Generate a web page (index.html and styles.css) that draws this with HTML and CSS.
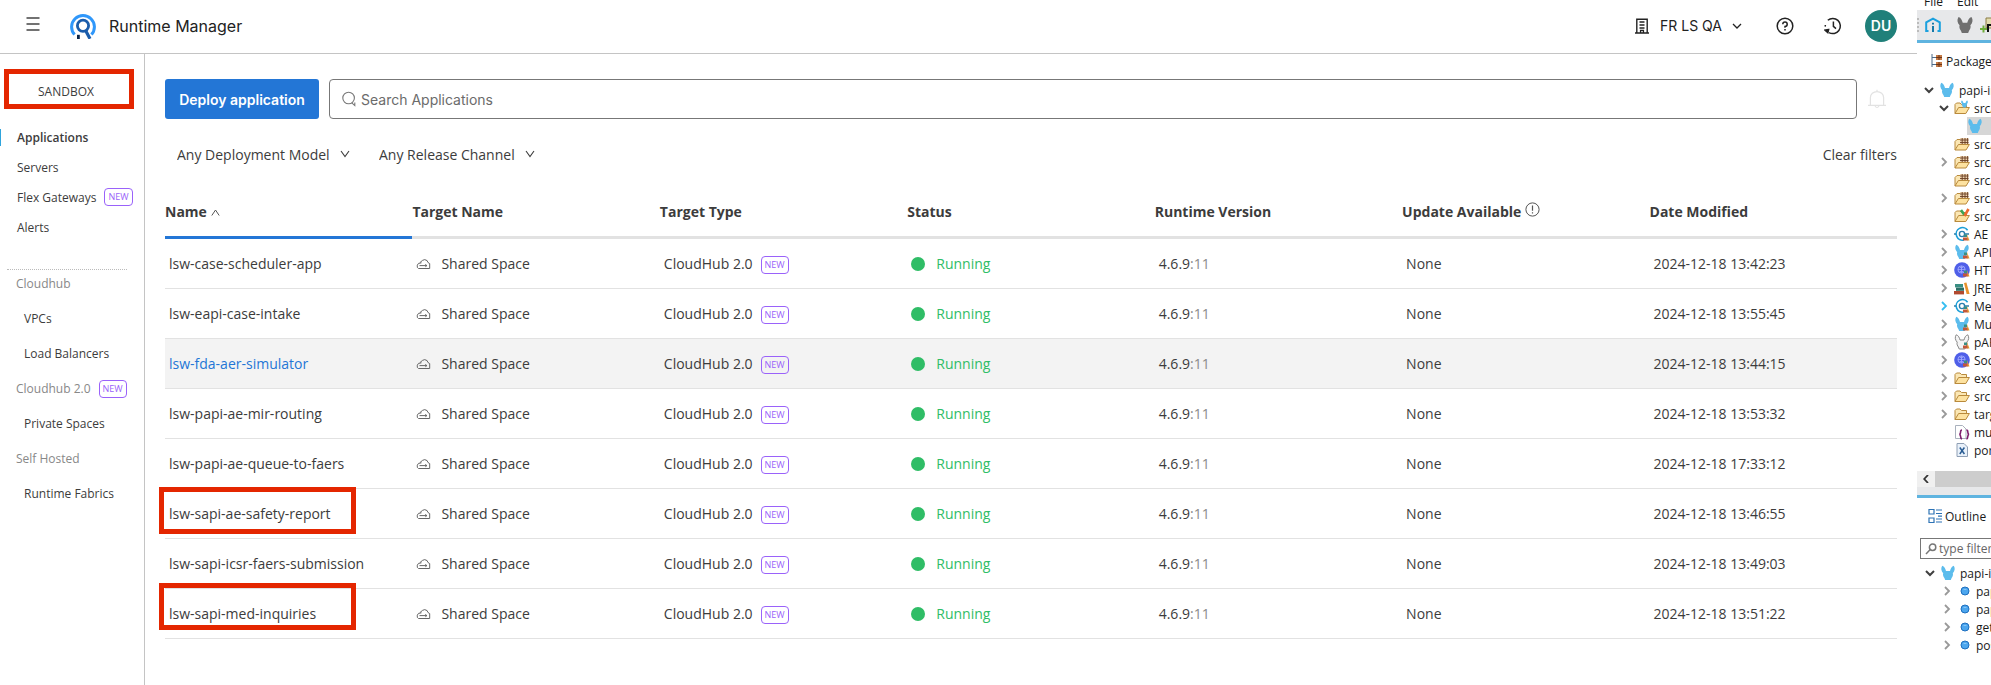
FILE: index.html
```html
<!DOCTYPE html>
<html lang="en">
<head>
    <meta charset="UTF-8">
    <meta name="viewport" content="width=device-width, initial-scale=1.0">
    <title>Runtime Manager</title>
    <link rel="stylesheet" href="styles.css">
</head>
<body>
    <!-- Shared icons -->
    <svg class="sprite" aria-hidden="true">
        <symbol id="cloud" viewBox="0 0 14 12">
            <path d="M3.4 4.6L6 2.4L8.2 1.6L10.6 2.6L11.4 4.4L13.2 5.6V10.5H2L.8 9.4V7.2L2 5.4L5 4.8M3 7.6H10.4M8.8 6.4L10.4 7.6L8.8 8.8" fill="none" stroke="#666" stroke-width="1"/>
        </symbol>
        <symbol id="down" viewBox="0 0 10 10">
            <path d="M1 2L5 7.5L9 2" fill="none" stroke="currentColor" stroke-width="1.1"/>
        </symbol>
        <symbol id="open" viewBox="0 0 10 10">
            <path d="M1 3L5 7L9 3" fill="none" stroke="#404040" stroke-width="2"/>
        </symbol>
        <symbol id="closed" viewBox="0 0 10 10">
            <path d="M3 1L7 5L3 9" fill="none" stroke="currentColor" stroke-width="1.8"/>
        </symbol>
        <symbol id="mule" viewBox="0 0 16 16">
            <path d="M2.2.8C4.4 1.4 5.4 3.6 6 6H10C10.6 3.6 11.6 1.4 13.8.8C15.4 3.4 14.8 6 12.8 8.2C13.4 10 12.6 11.8 11.6 13L10.8 15H5.2L4.4 13C3.4 11.8 2.6 10 3.2 8.2C1.2 6 .6 3.4 2.2.8Z" fill="currentColor"/>
        </symbol>
        <symbol id="folder" viewBox="0 0 16 16">
            <path d="M1 13.5V4.5L2.5 3H6L7.5 4.5H12.5V7" fill="#fbe7b4" stroke="#b98a3c"/>
            <path d="M1 13.5L4.6 7.5H15.4L11.8 13.5Z" fill="#fde2a0" stroke="#b98a3c"/>
        </symbol>
        <symbol id="package" viewBox="0 0 16 16">
            <path d="M1 14V5.5L3 3.5H6L7 5H13V8" fill="#fbe7b4" stroke="#b98a3c"/>
            <path d="M6 2H14.5V9H6Z" fill="#ecd2ae"/>
            <path d="M6 4H14.5M6 6.5H14.5M8.2 2V9M11 2V9M13.6 2V9" stroke="#6b3f24" fill="none" stroke-width=".9"/>
            <path d="M1 14L4.4 8.5H15.4L12 14Z" fill="#fde2a0" stroke="#b98a3c"/>
        </symbol>
        <symbol id="books" viewBox="0 0 16 16">
            <path d="M10 8.5H13V11H10Z" fill="#3a8f83"/>
            <path d="M9 11.5H14V14.5H9Z" fill="#c2573a"/>
            <path d="M13 8L15.5 14.5H13.6Z" fill="#e59a2f"/>
        </symbol>
        <symbol id="connector" viewBox="0 0 16 16">
            <path d="M13.6 4.2A6.3 6.3 0 1 0 10 14" fill="none" stroke="#1c9fd8" stroke-width="1.6"/>
            <circle cx="8" cy="8" r="2.6" fill="none" stroke="#2b7fae" stroke-width="1.4"/>
            <path d="M0 8H2M10.6 8H15" stroke="#2b7fae" stroke-width="1.4"/>
            <use href="#books"/>
        </symbol>
        <symbol id="globe" viewBox="0 0 16 16">
            <circle cx="8" cy="8" r="7.8" fill="#4f5fe8"/>
            <circle cx="7.5" cy="7.5" r="3.6" fill="none" stroke="#a9b3ff" stroke-width=".8"/>
            <path d="M4 7.5H11M7.5 4V11M5.5 5Q7.5 7 9.5 5M5.5 10Q7.5 8 9.5 10" fill="none" stroke="#a9b3ff" stroke-width=".7"/>
            <use href="#books"/>
        </symbol>
        <symbol id="dot" viewBox="0 0 10 10">
            <circle cx="5" cy="5" r="4" fill="#4ca6ee" stroke="#1d6fbf"/>
            <path d="M3 4A2.5 2 0 0 1 7 4Z" fill="#a9d8fa"/>
        </symbol>
    </svg>

    <div class="app">
        <header class="topbar">
            <button class="icon-btn" aria-label="Menu">
                <svg width="14" height="14" viewBox="0 0 14 14"><path d="M.5 1H13.5M.5 7H13.5M.5 13H13.5" stroke="#444" stroke-width="1.5"/></svg>
            </button>
            <svg class="logo" width="26" height="26" viewBox="0 0 26 26" fill="none">
                <path d="M4.6 21.6A11.4 11.4 0 1 1 21.4 21.6" stroke="#2f97fa" stroke-width="3"/>
                <circle cx="13" cy="12.8" r="5.6" stroke="#1a5cab" stroke-width="2.8"/>
                <path d="M15.6 17.4L20 25.8" stroke="#1a5cab" stroke-width="3.2"/>
                <path d="M8.4 21.8V26" stroke="#0b2549" stroke-width="2.8"/>
            </svg>
            <h1>Runtime Manager</h1>
            <div class="topbar-right">
                <button class="org">
                    <svg width="16" height="16" viewBox="0 0 16 16" fill="none" stroke="#222" stroke-width="1.4"><path d="M1 15H15M2.8 15V1.2H13.2V15M5.5 4H10.5M5.5 7H10.5M5.5 10H10.5M6.6 15V12.4H9.4V15"/></svg>
                    FR LS QA
                    <svg width="10" height="10" viewBox="0 0 10 10"><path d="M1 3L5 7L9 3" fill="none" stroke="#222" stroke-width="1.3"/></svg>
                </button>
                <button class="icon-btn" aria-label="Help">
                    <svg width="18" height="18" viewBox="0 0 18 18" fill="none" stroke="#222" stroke-width="1.5"><circle cx="9" cy="9" r="7.8"/><path d="M6.8 7.2A2.2 2.2 0 1 1 9 9.4V10.8M9 12V13.5"/></svg>
                </button>
                <button class="icon-btn" aria-label="History">
                    <svg width="18" height="18" viewBox="0 0 18 18" fill="none" stroke="#222" stroke-width="1.5"><path d="M3.8 3.2A7.6 7.6 0 1 1 5 15.6M9.4 4.5V9.3L12 11.6"/><path d="M4.6 12.6L1 13.2L3.8 15.6Z" fill="#222"/><path d="M1.3 8V9.6"/></svg>
                </button>
                <button class="avatar">DU</button>
            </div>
        </header>

        <div class="body">
            <nav class="sidebar">
                <a class="env" href="#">SANDBOX<span class="mark mark-env"></span></a>
                <ul class="nav-main">
                    <li class="active"><a href="#">Applications</a></li>
                    <li><a href="#">Servers</a></li>
                    <li><a href="#">Flex Gateways</a><span class="new">NEW</span></li>
                    <li><a href="#">Alerts</a></li>
                </ul>
                <ul class="nav-sub">
                    <li class="group">Cloudhub</li>
                    <li><a href="#">VPCs</a></li>
                    <li><a href="#">Load Balancers</a></li>
                    <li class="group">Cloudhub 2.0<span class="new">NEW</span></li>
                    <li><a href="#">Private Spaces</a></li>
                    <li class="group">Self Hosted</li>
                    <li><a href="#">Runtime Fabrics</a></li>
                </ul>
            </nav>

            <main class="content">
                <div class="actions">
                    <button class="deploy">Deploy application</button>
                    <label class="search">
                        <svg width="14" height="16" viewBox="0 0 14 16" fill="none" stroke="#777" stroke-width="1.1"><circle cx="6.6" cy="7" r="5.8"/><path d="M9.8 11.8L12.8 14.6V11.4"/></svg>
                        <input type="text" placeholder="Search Applications" aria-label="Search Applications">
                    </label>
                    <button class="bell" aria-label="Notifications">
                        <svg width="20" height="20" viewBox="0 0 20 20" fill="none" stroke="#e2e2e2" stroke-width="1.2"><path d="M1 16.4H19M3.4 16V8.6C3.4 5 6.4 2.6 10 2.6S16.6 5 16.6 8.6V16M10 .8V2.6M8 17Q10 20 12 17"/></svg>
                    </button>
                </div>

                <div class="filters">
                    <label class="filter">
                        <select aria-label="Deployment model"><option>Any Deployment Model</option></select>
                        <svg width="10" height="10"><use href="#down"/></svg>
                    </label>
                    <label class="filter">
                        <select aria-label="Release channel"><option>Any Release Channel</option></select>
                        <svg width="10" height="10"><use href="#down"/></svg>
                    </label>
                    <button class="clear">Clear filters</button>
                </div>

                <table class="apps">
                    <thead>
                        <tr>
                            <th class="sorted">Name <svg width="9" height="8" viewBox="0 0 9 8"><path d="M.8 6.5L4.5 1L8.2 6.5" fill="none" stroke="#555"/></svg></th>
                            <th>Target Name</th>
                            <th>Target Type</th>
                            <th>Status</th>
                            <th>Runtime Version</th>
                            <th>Update Available <svg class="info" width="15" height="15" viewBox="0 0 15 15" fill="none" stroke="#555"><circle cx="7.5" cy="7.5" r="6.6"/><path d="M7.5 3.4V8.8M7.5 10.2V11.6" stroke-width="1.2"/></svg></th>
                            <th>Date Modified</th>
                        </tr>
                    </thead>
                    <tbody>
                        <tr>
                            <td><a href="#">lsw-case-scheduler-app</a></td>
                            <td><svg class="cloud"><use href="#cloud"/></svg>Shared Space</td>
                            <td>CloudHub 2.0<span class="new">NEW</span></td>
                            <td class="running">Running</td>
                            <td>4.6.9<span class="patch">:11</span></td>
                            <td>None</td>
                            <td>2024-12-18 13:42:23</td>
                        </tr>
                        <tr>
                            <td><a href="#">lsw-eapi-case-intake</a></td>
                            <td><svg class="cloud"><use href="#cloud"/></svg>Shared Space</td>
                            <td>CloudHub 2.0<span class="new">NEW</span></td>
                            <td class="running">Running</td>
                            <td>4.6.9<span class="patch">:11</span></td>
                            <td>None</td>
                            <td>2024-12-18 13:55:45</td>
                        </tr>
                        <tr class="hovered">
                            <td><a href="#">lsw-fda-aer-simulator</a></td>
                            <td><svg class="cloud"><use href="#cloud"/></svg>Shared Space</td>
                            <td>CloudHub 2.0<span class="new">NEW</span></td>
                            <td class="running">Running</td>
                            <td>4.6.9<span class="patch">:11</span></td>
                            <td>None</td>
                            <td>2024-12-18 13:44:15</td>
                        </tr>
                        <tr>
                            <td><a href="#">lsw-papi-ae-mir-routing</a></td>
                            <td><svg class="cloud"><use href="#cloud"/></svg>Shared Space</td>
                            <td>CloudHub 2.0<span class="new">NEW</span></td>
                            <td class="running">Running</td>
                            <td>4.6.9<span class="patch">:11</span></td>
                            <td>None</td>
                            <td>2024-12-18 13:53:32</td>
                        </tr>
                        <tr>
                            <td><a href="#">lsw-papi-ae-queue-to-faers</a></td>
                            <td><svg class="cloud"><use href="#cloud"/></svg>Shared Space</td>
                            <td>CloudHub 2.0<span class="new">NEW</span></td>
                            <td class="running">Running</td>
                            <td>4.6.9<span class="patch">:11</span></td>
                            <td>None</td>
                            <td>2024-12-18 17:33:12</td>
                        </tr>
                        <tr>
                            <td><a href="#">lsw-sapi-ae-safety-report</a><span class="mark mark-report"></span></td>
                            <td><svg class="cloud"><use href="#cloud"/></svg>Shared Space</td>
                            <td>CloudHub 2.0<span class="new">NEW</span></td>
                            <td class="running">Running</td>
                            <td>4.6.9<span class="patch">:11</span></td>
                            <td>None</td>
                            <td>2024-12-18 13:46:55</td>
                        </tr>
                        <tr>
                            <td><a href="#">lsw-sapi-icsr-faers-submission</a></td>
                            <td><svg class="cloud"><use href="#cloud"/></svg>Shared Space</td>
                            <td>CloudHub 2.0<span class="new">NEW</span></td>
                            <td class="running">Running</td>
                            <td>4.6.9<span class="patch">:11</span></td>
                            <td>None</td>
                            <td>2024-12-18 13:49:03</td>
                        </tr>
                        <tr>
                            <td><a href="#">lsw-sapi-med-inquiries</a><span class="mark mark-inquiries"></span></td>
                            <td><svg class="cloud"><use href="#cloud"/></svg>Shared Space</td>
                            <td>CloudHub 2.0<span class="new">NEW</span></td>
                            <td class="running">Running</td>
                            <td>4.6.9<span class="patch">:11</span></td>
                            <td>None</td>
                            <td>2024-12-18 13:51:22</td>
                        </tr>
                    </tbody>
                </table>
            </main>
        </div>
    </div>

    <!-- Studio window -->
    <aside class="ide">
        <div class="ide-menu"><span>File</span><span>Edit</span></div>
        <div class="ide-tools">
            <span class="grip"></span>
            <svg width="16" height="16" viewBox="0 0 16 16" fill="none" stroke="#1ba0de" stroke-width="2"><path d="M3.5 14H1.2V5.4L8 1.6L14.8 5.4V14H12.5"/><path d="M8 9V15M8 5.8V7.6" stroke="#1679a8"/></svg>
            <span class="sep"></span>
            <svg class="gray" width="18" height="18"><use href="#mule"/></svg>
            <svg width="18" height="18" viewBox="0 0 18 18"><path d="M6 2H16V12H6Z" fill="#e3dcae" stroke="#8a7d45"/><path d="M0 13H7M3.5 9.5V16.5" stroke="#6fae3a" stroke-width="2"/><path d="M8 16V9H18M12 16V9M16 16V9" stroke="#111" stroke-width="2" fill="none"/></svg>
        </div>
        <div class="ide-tab">
            <svg width="12" height="14" viewBox="0 0 12 14"><path d="M1 0V13M1 3.5H5M1 10.5H5" stroke="#4c6b88" fill="none"/><path d="M5 1H11V6H5ZM5 8H11V13H5Z" fill="#c47a45"/><path d="M5 3.5H11M8 1V6M5 10.5H11M8 8V13" stroke="#6e3517"/></svg>
            Package
        </div>
        <ul class="tree explorer">
            <li class="root"><svg class="arrow"><use href="#open"/></svg><svg class="ico blue"><use href="#mule"/></svg>papi-in</li>
            <li><svg class="arrow"><use href="#open"/></svg><svg class="ico blue" viewBox="0 0 16 16"><use href="#folder"/><use href="#mule" x="6" y="0" width="9" height="8"/></svg>src/</li>
            <li class="selected"><svg class="ico blue"><use href="#mule"/></svg></li>
            <li><i class="arrow"></i><svg class="ico"><use href="#package"/></svg>src/</li>
            <li><svg class="arrow"><use href="#closed"/></svg><svg class="ico"><use href="#package"/></svg>src/</li>
            <li><i class="arrow"></i><svg class="ico"><use href="#package"/></svg>src/</li>
            <li><svg class="arrow"><use href="#closed"/></svg><svg class="ico"><use href="#package"/></svg>src/</li>
            <li><i class="arrow"></i><svg class="ico" viewBox="0 0 16 16"><use href="#folder"/><path d="M7 2L10.5 7" stroke="#3aa655" stroke-width="2.6"/><path d="M14.5 1L10.5 8" stroke="#ee6a2c" stroke-width="2.6"/></svg>src/</li>
            <li><svg class="arrow"><use href="#closed"/></svg><svg class="ico"><use href="#connector"/></svg>AE</li>
            <li><svg class="arrow"><use href="#closed"/></svg><svg class="ico blue" viewBox="0 0 16 16"><use href="#mule"/><use href="#books"/></svg>API</li>
            <li><svg class="arrow"><use href="#closed"/></svg><svg class="ico"><use href="#globe"/></svg>HTT</li>
            <li><svg class="arrow"><use href="#closed"/></svg><svg class="ico" viewBox="0 0 16 16"><path d="M1 4H9V7.4H1Z" fill="#3a8f83"/><path d="M2 7.6H10V10.8H2Z" fill="#2c6f66"/><path d="M0 11H10V14.4H0Z" fill="#b1492f"/><path d="M10 3L12.4 2.4L15.6 14H12.6Z" fill="#e8912c"/></svg>JRE</li>
            <li><svg class="arrow lit"><use href="#closed"/></svg><svg class="ico"><use href="#connector"/></svg>Me</li>
            <li><svg class="arrow"><use href="#closed"/></svg><svg class="ico blue" viewBox="0 0 16 16"><use href="#mule"/><use href="#books"/></svg>Mu</li>
            <li><svg class="arrow"><use href="#closed"/></svg><svg class="ico outline" viewBox="0 0 16 16"><use href="#mule" stroke="#888"/><use href="#books"/></svg>pAP</li>
            <li><svg class="arrow"><use href="#closed"/></svg><svg class="ico"><use href="#globe"/></svg>Soc</li>
            <li><svg class="arrow"><use href="#closed"/></svg><svg class="ico"><use href="#folder"/></svg>exc</li>
            <li><svg class="arrow"><use href="#closed"/></svg><svg class="ico"><use href="#folder"/></svg>src</li>
            <li><svg class="arrow"><use href="#closed"/></svg><svg class="ico"><use href="#folder"/></svg>targ</li>
            <li><i class="arrow"></i><svg class="ico" viewBox="0 0 16 16" fill="none"><path d="M1.5 14.5V1.5H8.5L12 5V14.5Z" fill="#fff" stroke="#a9b1bd"/><path d="M8 6Q6.6 6 6.6 8T5.4 10.4Q6.6 10.6 6.6 12.6T8 15M12.4 6Q13.8 6 13.8 8T15 10.4Q13.8 10.6 13.8 12.6T12.4 15" stroke="#7d1f6d" stroke-width="1.6"/></svg>mu</li>
            <li><i class="arrow"></i><svg class="ico" viewBox="0 0 16 16" fill="none"><path d="M3 14.5V1.5H10L13.5 5V14.5Z" fill="#e9f1fa" stroke="#8f9fb4"/><path d="M5.8 5.5L10.4 12M10.4 5.5L5.8 12" stroke="#2a5d94" stroke-width="1.5"/></svg>por</li>
        </ul>
        <div class="scrollbar">
            <svg width="6" height="8" viewBox="0 0 6 8"><path d="M5 0L1.2 4L5 8" fill="none" stroke="#333" stroke-width="1.8"/></svg>
            <span class="thumb"></span>
        </div>
        <div class="ide-tab outline-tab">
            <svg width="14" height="16" viewBox="0 0 14 16" fill="none" stroke="#2d73b5" stroke-width="1.2"><path d="M1 1.5H6V6H1ZM1 10H6V14.5H1Z"/><path d="M8 2H14M8 5.5H14M10 8.2H14M8 11H14M8 14H14"/></svg>
            Outline
        </div>
        <label class="ide-filter">
            <svg width="12" height="12" viewBox="0 0 12 12" fill="none" stroke="#777" stroke-width="1.5"><circle cx="7.6" cy="4.2" r="3.2"/><path d="M5.2 6.6L1 11"/></svg>
            <input type="text" placeholder="type filter" aria-label="type filter">
        </label>
        <ul class="tree outline-tree">
            <li class="root"><svg class="arrow"><use href="#open"/></svg><svg class="ico blue"><use href="#mule"/></svg>papi-i</li>
            <li><svg class="arrow"><use href="#closed"/></svg><svg class="bullet"><use href="#dot"/></svg>pap</li>
            <li><svg class="arrow"><use href="#closed"/></svg><svg class="bullet"><use href="#dot"/></svg>pap</li>
            <li><svg class="arrow"><use href="#closed"/></svg><svg class="bullet"><use href="#dot"/></svg>get</li>
            <li><svg class="arrow"><use href="#closed"/></svg><svg class="bullet"><use href="#dot"/></svg>pos</li>
        </ul>
    </aside>
</body>
</html>
```

FILE: styles.css
```css
* {
    box-sizing: border-box;
}
body {
    font-family: "Open Sans", "Noto Sans", sans-serif;
    font-size: 14px;
    margin: 0;
    display: flex;
    min-height: 100vh;
    background-color: #fff;
    color: #3c3c3c;
}
a {
    color: inherit;
    text-decoration: none;
}
ul {
    list-style: none;
    margin: 0;
    padding: 0;
}
button {
    border: 0;
    padding: 0;
    background: none;
    font: inherit;
    color: inherit;
    cursor: pointer;
}
svg {
    flex: none;
}
.sprite {
    position: absolute;
    width: 0;
    height: 0;
}
.app {
    flex: 1;
    min-width: 0;
    display: flex;
    flex-direction: column;
}

/* Top bar */
.topbar {
    height: 54px;
    display: flex;
    align-items: center;
    padding: 0 20px 2px 26px;
    border-bottom: 1px solid #c4c4c4;
    font-family: Inter, "Liberation Sans", sans-serif;
    color: #222;
}
.icon-btn {
    display: flex;
}
.topbar > .icon-btn {
    margin-bottom: 4px;
}
.logo {
    margin-left: 30px;
}
.topbar h1 {
    margin: 0 0 0 13px;
    font-size: 16px;
    font-weight: 400;
}
.topbar-right {
    margin-left: auto;
    display: flex;
    align-items: center;
    gap: 30px;
}
.org {
    display: flex;
    align-items: center;
    gap: 10px;
    margin-right: 4px;
}
.avatar {
    width: 32px;
    height: 32px;
    margin-left: -7px;
    border-radius: 50%;
    background-color: #20807a;
    color: #fff;
    font-weight: 600;
}

/* Sidebar */
.body {
    flex: 1;
    display: flex;
}
.sidebar {
    width: 145px;
    flex: none;
    padding-top: 22px;
    border-right: 1px solid #c4c4c4;
    font-size: 12px;
}
.env {
    position: relative;
    display: block;
    padding-left: 38px;
    line-height: 32px;
    margin-bottom: 14px;
}
.sidebar li {
    display: flex;
    align-items: center;
}
.nav-main {
    margin-bottom: 24px;
}
.nav-main li {
    height: 30px;
    padding-left: 17px;
}
.nav-main .active {
    font-weight: 600;
    background: linear-gradient(#2fa4dc, #2fa4dc) 0 center / 1px 17px no-repeat;
}
.nav-sub {
    position: relative;
}
.nav-sub::before {
    content: "";
    position: absolute;
    left: 7px;
    top: 3px;
    width: 120px;
    border-top: 1px dotted #bbb;
}
.nav-sub li {
    height: 35px;
    padding-left: 24px;
}
.nav-sub .group {
    padding-left: 16px;
    color: #888;
}
.new {
    display: inline-block;
    margin-left: 8px;
    padding: 0 3px;
    border: 1px solid #9a62fa;
    border-radius: 4px;
    color: #9a62fa;
    font-size: 9px;
    line-height: 16px;
    vertical-align: 1px;
}

/* Content */
.content {
    flex: 1;
    min-width: 0;
    padding: 25px 20px 40px;
}
.actions {
    display: flex;
    gap: 10px;
    font-family: Inter, "Liberation Sans", sans-serif;
}
.deploy {
    width: 154px;
    height: 40px;
    border-radius: 3px;
    background-color: #2376d6;
    color: #fff;
    font-weight: 600;
}
.search {
    flex: 1;
    display: flex;
    align-items: center;
    gap: 5px;
    padding: 0 12px;
    border: 1px solid #777;
    border-radius: 4px;
}
.search input {
    flex: 1;
    border: 0;
    padding: 0;
    outline: 0;
    font: inherit;
}
.search input::placeholder {
    color: #6b6b6b;
}
.bell {
    width: 30px;
    display: flex;
    align-items: center;
}
.filters {
    display: flex;
    align-items: center;
    gap: 29px;
    height: 24px;
    margin: 23px 0;
    padding-left: 12px;
}
.filter {
    display: flex;
    align-items: center;
    gap: 10px;
}
.filter select {
    appearance: none;
    border: 0;
    padding: 0;
    background: none;
    color: inherit;
    font: inherit;
}
.clear {
    margin-left: auto;
}

/* Applications table */
.apps {
    width: 100%;
    table-layout: fixed;
    border-collapse: separate;
    border-spacing: 0;
}
.apps th {
    height: 50px;
    padding: 0 0 2px;
    border-bottom: 3px solid #e2e2e2;
    text-align: left;
    font-weight: 700;
    white-space: nowrap;
}
.apps .sorted {
    border-color: #2376d6;
}
.info {
    vertical-align: 0;
}
.apps td {
    position: relative;
    height: 50px;
    padding: 0 0 0 4px;
    border-bottom: 1px solid #e2e2e2;
    white-space: nowrap;
}
.apps td a {
    position: relative;
    z-index: 1;
}
.hovered td {
    background-color: #f3f3f3;
}
.hovered a {
    color: #2376d6;
}
.cloud {
    width: 15px;
    height: 12px;
    margin-right: 10px;
    vertical-align: -1px;
}
.apps .running {
    color: #2fbd66;
}
.running::before {
    content: "";
    display: inline-block;
    width: 14px;
    height: 14px;
    margin-right: 11px;
    border-radius: 50%;
    background-color: #2fbd66;
    vertical-align: -2px;
}
.patch {
    color: #8a8a8a;
}

/* Red boxes round the highlighted entries */
.mark {
    position: absolute;
    border: 5px solid #e42600;
}
.mark-env {
    left: 4px;
    top: -7px;
    width: 130px;
    height: 40px;
}
.mark-report,
.mark-inquiries {
    left: -6px;
    top: -2px;
    width: 197px;
    height: 47px;
}
.mark-inquiries {
    top: -6px;
}

/* Studio window */
.ide {
    width: 74px;
    flex: none;
    overflow: hidden;
    font-size: 12px;
    color: #1a1a1a;
    white-space: nowrap;
}
.ide-menu {
    height: 10px;
    display: flex;
    align-items: flex-end;
    gap: 14px;
    padding-left: 7px;
    overflow: hidden;
    line-height: 16px;
}
.ide-tools {
    height: 33px;
    display: flex;
    align-items: center;
    gap: 6px;
    background-color: #e7e8ea;
    border-bottom: 3px solid #5fb4e0;
}
.grip {
    width: 2px;
    height: 14px;
    border-left: 2px dotted #bbb;
}
.sep {
    width: 1px;
    height: 18px;
    background-color: #999;
}
.gray {
    color: #6f6f6f;
    margin-left: 3px;
}
.ide-tab {
    height: 36px;
    display: flex;
    align-items: center;
    gap: 3px;
    padding-left: 14px;
}
.tree li {
    height: 18px;
    display: flex;
    align-items: center;
    padding-left: 22px;
}
.tree .root {
    padding-left: 7px;
}
.explorer {
    padding-top: 2px;
}
.arrow {
    width: 10px;
    height: 10px;
    flex: none;
    margin-right: 5px;
    color: #999;
}
.lit {
    color: #35bdf0;
}
.ico {
    width: 16px;
    height: 16px;
    margin-right: 4px;
}
.blue {
    color: #5cbcec;
}
.outline {
    color: #f4f4f4;
}
.tree .selected {
    margin-left: 50px;
    padding-left: 0;
    background-color: #d6d6d6;
}
.scrollbar {
    height: 16px;
    margin-top: 12px;
    display: flex;
    align-items: center;
    gap: 6px;
    padding-left: 6px;
    background-color: #f0f0f0;
}
.thumb {
    flex: 1;
    height: 16px;
    background-color: #cdcdcd;
}
.outline-tab {
    height: 39px;
    padding-left: 11px;
    border-top: 3px solid #5fb4e0;
    margin-top: 8px;
    box-shadow: 0 -8px #e7e8ea;
}
.ide-filter {
    display: flex;
    align-items: center;
    gap: 2px;
    width: 160px;
    height: 21px;
    margin: 4px 0 5px 3px;
    padding-left: 4px;
    border: 1px solid #777;
}
.ide-filter input {
    width: 120px;
    border: 0;
    padding: 0;
    outline: 0;
    font: inherit;
}
.ide-filter input::placeholder {
    color: #666;
}
.outline-tree .root {
    padding-left: 8px;
}
.outline-tree li {
    padding-left: 25px;
}
.bullet {
    width: 10px;
    height: 10px;
    margin: 0 6px 0 3px;
}
```
